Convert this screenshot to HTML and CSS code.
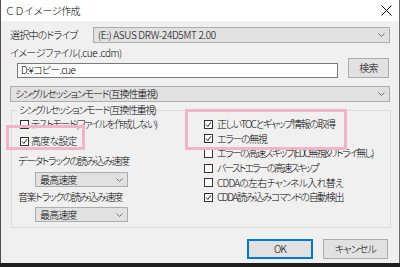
FILE: index.html
```html
<!DOCTYPE html>
<html lang="ja">
<head>
<meta charset="utf-8">
<link rel="stylesheet" href="styles.css">
</head>
<body>
<div class="screen">
  <div class="window">
    <div class="titlebar">
      <span class="title">ＣＤイメージ作成</span>
      <svg class="close" width="11" height="11" viewBox="0 0 11 11"><path d="M0.5 0.5L10.5 10.5M10.5 0.5L0.5 10.5" stroke="#111" stroke-width="1" fill="none"/></svg>
    </div>
    <div class="content">
      <div class="row drive">
        <span class="lbl">選択中のドライブ</span>
        <div class="select drive-select"><span>(E:) ASUS DRW-24D5MT 2.00</span><svg class="chev" width="7" height="4" viewBox="0 0 7 4"><path d="M0.5 0.5L3.5 3.5L6.5 0.5" stroke="#707070" fill="none"/></svg></div>
      </div>
      <div class="lbl file-lbl">イメージファイル(.cue .cdm)</div>
      <div class="row file">
        <div class="input">D:¥コピー.cue</div>
        <div class="btn search">検索</div>
      </div>
      <div class="select mode-select"><span class="mode-text">シングルセッションモード(互換性重視)</span><svg class="chev" width="7" height="4" viewBox="0 0 7 4"><path d="M0.5 0.5L3.5 3.5L6.5 0.5" stroke="#707070" fill="none"/></svg></div>
      <fieldset class="group">
        <legend class="kana">シングルセッションモード(互換性重視)</legend>
        <div class="cols">
          <div class="col left">
            <div class="cb"><span class="box"></span><span class="kana">テストモード(ファイルを作成しない)</span></div>
            <div class="cb adv"><span class="box on"><svg width="7" height="7" viewBox="0 0 7 7"><path d="M1 3.5L2.8 5.5L6 1.2" stroke="#222" fill="none"/></svg></span><span>高度な設定</span></div>
            <div class="lbl sub-lbl data-lbl kana">データトラックの読み込み速度</div>
            <div class="select speed"><span>最高速度</span><svg class="chev" width="7" height="4" viewBox="0 0 7 4"><path d="M0.5 0.5L3.5 3.5L6.5 0.5" stroke="#707070" fill="none"/></svg></div>
            <div class="lbl sub-lbl music-lbl kana">音楽トラックの読み込み速度</div>
            <div class="select speed"><span>最高速度</span><svg class="chev" width="7" height="4" viewBox="0 0 7 4"><path d="M0.5 0.5L3.5 3.5L6.5 0.5" stroke="#707070" fill="none"/></svg></div>
          </div>
          <div class="col right">
            <div class="cb rcb"><span class="box on"><svg width="7" height="7" viewBox="0 0 7 7"><path d="M1 3.5L2.8 5.5L6 1.2" stroke="#222" fill="none"/></svg></span><span class="kana">正しいTOCとギャップ情報の取得</span></div>
            <div class="cb rcb"><span class="box on"><svg width="7" height="7" viewBox="0 0 7 7"><path d="M1 3.5L2.8 5.5L6 1.2" stroke="#222" fill="none"/></svg></span><span class="kana">エラーの無視</span></div>
            <div class="cb rcb"><span class="box"></span><span class="tighter">エラーの高速スキップ(EDC無視&amp;リトライ無し)</span></div>
            <div class="cb rcb"><span class="box"></span><span class="tightest">バーストエラーの高速スキップ</span></div>
            <div class="cb rcb"><span class="box"></span><span>CDDAの左右チャンネル入れ替え</span></div>
            <div class="cb rcb"><span class="box on"><svg width="7" height="7" viewBox="0 0 7 7"><path d="M1 3.5L2.8 5.5L6 1.2" stroke="#222" fill="none"/></svg></span><span class="kana">CDDA読み込みコマンドの自動検出</span></div>
          </div>
        </div>
      </fieldset>
      <div class="footer">
        <div class="btn ok">OK</div>
        <div class="btn cancel">キャンセル</div>
      </div>
    </div>
  </div>
  <div class="mark mark-left"></div>
  <div class="mark mark-right"></div>
</div>
</body>
</html>
```

FILE: styles.css
```css
html, body {
  margin: 0;
  padding: 0;
  background: #1e1e1e;
}
.screen {
  position: relative;
  width: 400px;
  height: 267px;
  overflow: hidden;
  background: #1e1e1e;
  font-family: "Noto Sans CJK JP", sans-serif;
  font-size: 10px;
  font-weight: 300;
  font-feature-settings: "palt";
  letter-spacing: -0.8px;
  color: #000;
}
.kana {
  letter-spacing: -1.4px;
}
.tighter {
  letter-spacing: -1.7px;
}
.tightest {
  letter-spacing: -2px;
}
.mode-text {
  letter-spacing: -1.1px;
}
.window {
  width: 400px;
  height: 263px;
  box-sizing: border-box;
  border-left: 1px solid #505050;
  border-right: 1px solid #6a6a6a;
  background: #f0f0f0;
  display: flex;
  flex-direction: column;
}
.titlebar {
  height: 21px;
  background: #fff;
  display: flex;
  align-items: center;
  padding-left: 4px;
  flex: none;
}
.title {
  font-size: 10px;
  line-height: 12px;
  font-feature-settings: normal;
  letter-spacing: -0.6px;
}
.close {
  margin-left: auto;
  margin-right: 7px;
}
.content {
  padding: 6px 9px 0 9px;
  display: flex;
  flex-direction: column;
}
.lbl {
  line-height: 12px;
  white-space: nowrap;
}
.row {
  display: flex;
}
.drive {
  height: 16px;
  align-items: center;
}
.select {
  box-sizing: border-box;
  height: 16px;
  border: 1px solid #adadad;
  background: #e1e1e1;
  display: flex;
  align-items: center;
  padding-left: 4px;
  line-height: 12px;
  white-space: nowrap;
}
.select .chev {
  margin-left: auto;
  margin-right: 4px;
  flex: none;
}
.drive-select {
  margin-left: auto;
  width: 297px;
  letter-spacing: -0.3px;
}
.file-lbl {
  margin-top: 4px;
  letter-spacing: -0.5px;
}
.file {
  align-items: flex-end;
  margin-top: -1px;
}
.input {
  box-sizing: border-box;
  width: 321px;
  height: 15px;
  margin-left: 7px;
  border: 1px solid #7a7a7a;
  background: #fff;
  padding-left: 3px;
  line-height: 12px;
}
.btn {
  box-sizing: border-box;
  height: 20px;
  border: 1px solid #adadad;
  background: #e1e1e1;
  display: flex;
  align-items: center;
  justify-content: center;
  line-height: 12px;
}
.search {
  width: 41px;
  margin-left: auto;
  margin-right: 1px;
}
.mode-select {
  margin-top: 8px;
}
.group {
  margin: 2px -1px 0 1px;
  padding: 0;
  border: 1px solid #dcdcdc;
  min-width: 0;
}
.group legend {
  margin-left: 5px;
  padding: 0 2px;
  line-height: 12px;
}
.cols {
  display: flex;
  padding-top: 1px;
  padding-bottom: 5px;
}
.col {
  display: flex;
  flex-direction: column;
}
.left {
  flex: none;
  width: 192px;
  padding-left: 8px;
  box-sizing: border-box;
}
.right {
  flex: none;
}
.cb {
  display: flex;
  align-items: center;
  height: 14px;
  line-height: 12px;
  white-space: nowrap;
}
.box {
  box-sizing: border-box;
  width: 9px;
  height: 9px;
  border: 1px solid #333;
  background: #fff;
  margin-right: 2px;
  display: flex;
  align-items: center;
  justify-content: center;
  flex: none;
}
.adv {
  margin-top: 3px;
}
.sub-lbl {
  height: 14px;
  line-height: 14px;
  margin-left: -2px;
}
.data-lbl {
  margin-top: 6px;
}
.music-lbl {
  margin-top: 3px;
}
.speed {
  width: 93px;
  height: 15px;
  margin-left: 15px;
  margin-top: 4px;
}
.music-lbl + .speed {
  margin-top: 3px;
}
.rcb {
  height: 14.6px;
}
.rcb .box {
  margin-right: 4px;
}
.footer {
  display: flex;
  justify-content: flex-end;
  gap: 10px;
  margin-top: 11px;
  margin-right: 2px;
}
.ok {
  width: 66px;
  border-color: #0078d7;
  box-shadow: inset 0 0 0 1px #0078d7;
}
.cancel {
  width: 65px;
}
.mark {
  position: absolute;
  box-sizing: border-box;
  border: 3px solid #f3b3c8;
}
.mark-left {
  left: 6px;
  top: 125px;
  width: 79px;
  height: 25px;
}
.mark-right {
  left: 185px;
  top: 109px;
  width: 162px;
  height: 41px;
}
```
